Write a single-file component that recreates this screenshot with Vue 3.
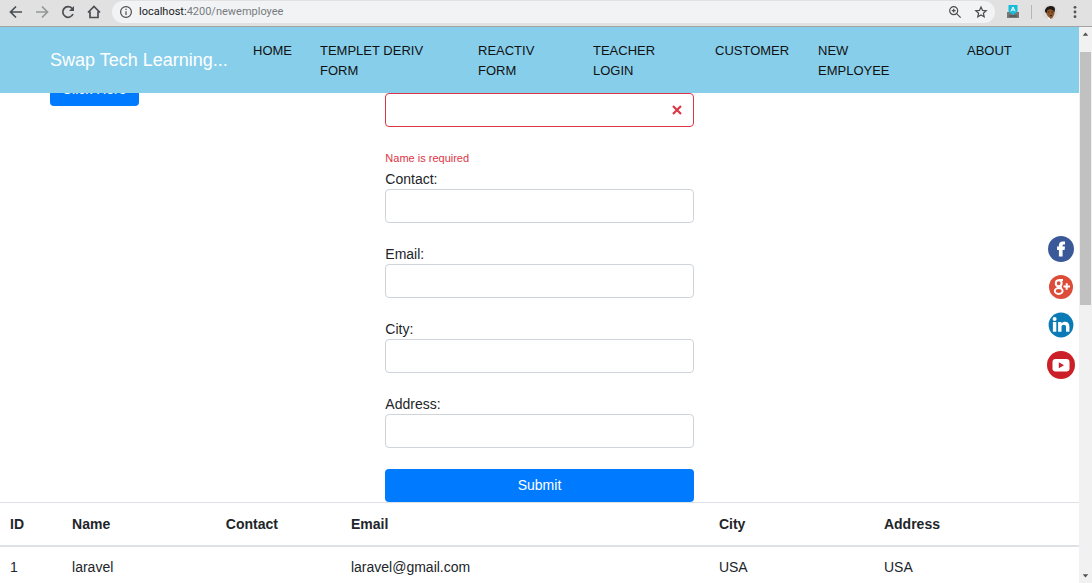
<script setup>
import { ref } from 'vue'

const links = ['HOME', 'TEMPLET DERIV FORM', 'REACTIV FORM', 'TEACHER LOGIN', 'CUSTOMER', 'NEW EMPLOYEE', 'ABOUT']
const fields = [
  { key: 'contact', label: 'Contact:' },
  { key: 'email', label: 'Email:' },
  { key: 'city', label: 'City:' },
  { key: 'address', label: 'Address:' },
]
const form = ref({ name: '', contact: '', email: '', city: '', address: '' })
const employees = [
  { id: 1, name: 'laravel', contact: '', email: 'laravel@gmail.com', city: 'USA', address: 'USA' },
]
</script>

<template>
  <div class="window">
    <div class="toolbar">
      <button class="tool" aria-label="Back">
        <svg viewBox="0 0 16 16" class="line"><path d="M14 8H3M8 2.5L2.5 8L8 13.5" /></svg>
      </button>
      <button class="tool faded" aria-label="Forward">
        <svg viewBox="0 0 16 16" class="line"><path d="M2 8H13M8 2.5L13.5 8L8 13.5" /></svg>
      </button>
      <button class="tool" aria-label="Reload">
        <svg viewBox="0 0 16 16" class="line"><path d="M13 10A5.3 5.3 0 1 1 12 4.4" /><path d="M14 2V7H9Z" class="solid" /></svg>
      </button>
      <button class="tool" aria-label="Home">
        <svg viewBox="0 0 16 16" class="line"><path d="M2 8.5L8 2.5L14 8.5M4 7.5V13.5H12V7.5" /></svg>
      </button>
      <div class="omnibox">
        <svg viewBox="0 0 16 16" class="line thin info"><circle cx="8" cy="8" r="5.4" /><path d="M8 7.3V11M8 4.8V6" /></svg>
        <button class="url"><span class="host">localhost:</span>4200/newemployee</button>
        <button class="tool" aria-label="Zoom">
          <svg viewBox="0 0 16 16" class="line thin"><circle cx="6.7" cy="6.7" r="4" /><path d="M9.8 9.8L13.7 13.7M4.8 6.7H8.6M6.7 4.8V8.6" /></svg>
        </button>
        <button class="tool" aria-label="Bookmark">
          <svg viewBox="0 0 16 16" class="line thin"><path d="M8 3L9.5 6.4L13.2 6.8L10.4 9.2L11.2 12.8L8 10.9L4.8 12.8L5.6 9.2L2.8 6.8L6.5 6.4Z" /></svg>
        </button>
      </div>
      <button class="tool ext" aria-label="Extension">
        <svg viewBox="0 0 16 16"><path d="M2 8H14V14H2Z" fill="#777" /><path d="M4 12H12" stroke="#444" /><path d="M3.5 1H12.5V7.5L8 11L3.5 7.5Z" fill="#18bcdb" /><path d="M6 7.3L8 3L10 7.3M6.8 6H9.2" fill="none" stroke="#fff" /></svg>
      </button>
      <span class="divider"></span>
      <button class="tool avatar" aria-label="Profile">
        <svg viewBox="0 0 16 16"><circle cx="8" cy="8" r="7.5" fill="#dadada" /><path d="M4 5Q8 2 12.5 5V9Q11.5 14 8.5 15Q5 12 4 9Z" fill="#8b552b" /><path d="M3 8C2 1 13 0 13 5L12.5 8Q10 4 5.5 6L4.5 9Z" fill="#211913" /><path d="M6 8H7M9.5 8H11M8 11.5H10" stroke="#3d2415" /><path d="M6 13L8.5 14.5L7 16Z" fill="#fff" /></svg>
      </button>
      <button class="tool menu" aria-label="Menu">
        <svg viewBox="0 0 16 16" fill="#505357"><circle cx="8" cy="3.3" r="1.4" /><circle cx="8" cy="8" r="1.4" /><circle cx="8" cy="12.7" r="1.4" /></svg>
      </button>
    </div>

    <div class="viewport">
      <div class="page">
        <header class="navbar">
          <a href="#" class="brand">Swap Tech Learning...</a>
          <nav>
            <ul class="links">
              <li v-for="l in links" :key="l"><a href="#">{{ l }}</a></li>
            </ul>
          </nav>
        </header>

        <main class="scroller">
          <div class="row">
            <div class="col"><button class="btn">Click Here</button></div>
            <form class="col form" @submit.prevent>
              <div class="invalid">
                <input id="name" v-model="form.name" type="text" aria-label="Name" aria-describedby="name-error" aria-invalid="true">
                <svg viewBox="0 0 10 10" class="cross"><path d="M1 1L9 9M9 1L1 9" /></svg>
              </div>
              <p id="name-error" class="error">Name is required</p>
              <template v-for="f in fields" :key="f.key">
                <label :for="f.key">{{ f.label }}</label>
                <input :id="f.key" v-model="form[f.key]" type="text">
              </template>
              <button class="btn wide" type="submit">Submit</button>
            </form>
          </div>

          <table>
            <colgroup>
              <col class="c-id"><col class="c-name"><col class="c-contact"><col class="c-email"><col class="c-city"><col>
            </colgroup>
            <thead>
              <tr><th>ID</th><th>Name</th><th>Contact</th><th>Email</th><th>City</th><th>Address</th></tr>
            </thead>
            <tbody>
              <tr v-for="e in employees" :key="e.id">
                <td>{{ e.id }}</td><td>{{ e.name }}</td><td>{{ e.contact }}</td><td>{{ e.email }}</td><td>{{ e.city }}</td><td>{{ e.address }}</td>
              </tr>
            </tbody>
          </table>
        </main>

        <aside class="social">
          <a href="#" aria-label="Facebook">
            <svg width="26" height="26" viewBox="0 0 26 26"><circle cx="13" cy="13" r="13" fill="#3b5998" /><path d="M10.9 20.5V13.9H9V10.6H10.9V9.2C10.9 6.8 12.3 5.4 14.7 5.4H17V8.6H15.8C14.9 8.6 14.6 9 14.6 9.7V10.6H17L16.6 13.9H14.6V20.5Z" fill="#fff" /></svg>
          </a>
          <a href="#" aria-label="Google Plus">
            <svg width="24" height="24" viewBox="0 0 24 24"><circle cx="12" cy="12" r="12" fill="#dd4b39" /><g fill="none" stroke="#fff"><ellipse cx="9.7" cy="8.2" rx="2.9" ry="3" stroke-width="2" /><ellipse cx="9.7" cy="16" rx="3.9" ry="2.9" stroke-width="2" /><path d="M9.7 5H14M11.4 11L12.4 13.5" stroke-width="1.8" /><path d="M14.5 11.5H21M17.7 8.3V14.7" stroke-width="2" /></g></svg>
          </a>
          <a href="#" aria-label="LinkedIn">
            <svg width="26" height="26" viewBox="0 0 26 26"><circle cx="13" cy="13" r="12.4" fill="#0b7bb8" /><g fill="#fff"><circle cx="6.6" cy="7" r="2" /><path d="M4.9 10.1H8.3V19.7H4.9ZM10.1 10.1H13.4V11.4C15.4 8.9 21.4 9 21.4 14.2V19.7H18V14.8C18 12 13.5 12 13.5 14.8V19.7H10.1Z" /></g></svg>
          </a>
          <a href="#" aria-label="YouTube">
            <svg width="28" height="28" viewBox="0 0 28 28"><circle cx="14" cy="14" r="14" fill="#cb2027" /><rect x="5.5" y="8" width="17" height="12.5" rx="3" fill="#fff" /><path d="M11.8 11.2L17 14.2L11.8 17.2Z" fill="#cb2027" /></svg>
          </a>
        </aside>
      </div>

      <div class="scrollbar">
        <svg viewBox="0 0 14 14" class="arrow"><path d="M4 9L7 5.5L10 9Z" /></svg>
        <div class="track"><div class="thumb"></div></div>
        <svg viewBox="0 0 14 14" class="arrow"><path d="M4 5L7 8.5L10 5Z" /></svg>
      </div>
    </div>
  </div>
</template>

<style>
body {
  overflow: hidden;
}
</style>

<style scoped>
* {
  box-sizing: border-box;
}
.window {
  display: flex;
  flex-direction: column;
  height: 100vh;
  background: #fff;
  color: #212529;
  font: 14px/21px "Liberation Sans", Arial, sans-serif;
}
button {
  padding: 0;
  border: 0;
  background: none;
  font: inherit;
  color: inherit;
}
a {
  color: inherit;
  text-decoration: none;
}
svg {
  display: block;
}

.toolbar {
  display: flex;
  align-items: center;
  flex: none;
  height: 27px;
  padding: 0 9px 3px 8px;
  gap: 10px;
  background: #e1e1e1;
  border-bottom: 1px solid #a3a3a3;
}
.tool {
  flex: none;
  width: 16px;
  height: 16px;
}
.line {
  fill: none;
  stroke: #4a4d51;
  stroke-width: 1.7;
}
.line .solid {
  fill: #4a4d51;
  stroke: none;
}
.thin {
  stroke-width: 1.2;
}
.faded {
  opacity: 0.5;
}
.omnibox {
  display: flex;
  align-items: center;
  flex: 1;
  height: 22px;
  padding: 0 6px;
  gap: 10px;
  border-radius: 11px;
  background: #f1f3f4;
}
.info {
  flex: none;
  width: 16px;
}
.url {
  flex: 1;
  margin-left: -5px;
  text-align: left;
  font: 11px/16px Roboto, sans-serif;
  color: #777b80;
}
.host {
  color: #202124;
}
.divider {
  width: 1px;
  height: 14px;
  background: #b5b5b5;
}
.avatar {
  margin-right: -1px;
}

.viewport {
  display: flex;
  flex: 1;
  min-height: 0;
}
.page {
  position: relative;
  display: flex;
  flex-direction: column;
  flex: 1;
  min-width: 0;
}
.navbar {
  display: flex;
  flex: none;
  height: 66px;
  padding: 0 52px 0 50px;
  background: #87ceeb;
}
.brand {
  flex: none;
  width: 203px;
  font-size: 18px;
  line-height: 66px;
  color: #fff;
}
nav {
  flex: 1;
}
.links {
  display: grid;
  grid-template-columns: 67fr 158fr 115fr 122fr 103fr 149fr 60fr;
  margin: 0;
  padding: 14px 0 0;
  list-style: none;
  font-size: 13px;
  line-height: 20px;
  color: #111;
}
.links li {
  padding-right: 28px;
}
.links li:nth-child(6) {
  padding-right: 56px;
}
.links li:last-child {
  padding-right: 0;
}

.scroller {
  flex: 1;
  min-height: 0;
  overflow: hidden;
}
.row {
  display: grid;
  grid-template-columns: repeat(3, 1fr);
  margin-top: -20px;
  padding: 0 37px 0 36px;
}
.col {
  padding: 0 14px;
}
.form {
  padding: 20px 13px 0 14px;
}
.btn {
  height: 33px;
  padding: 0 12px;
  border-radius: 4px;
  background: #007bff;
  color: #fff;
}
.wide {
  display: block;
  width: 100%;
}
label {
  display: block;
  height: 20px;
}
input {
  display: block;
  width: 100%;
  height: 34px;
  margin-bottom: 21px;
  padding: 0 10px;
  border: 1px solid #ced4da;
  border-radius: 4px;
  background: #fff;
  font: inherit;
  color: #495057;
}
.invalid {
  position: relative;
}
.invalid input {
  border-color: #dc3545;
}
.cross {
  position: absolute;
  top: 12px;
  right: 12px;
  width: 10px;
  fill: none;
  stroke: #dc3545;
  stroke-width: 2.2;
}
.error {
  margin: 0;
  font-size: 11px;
  line-height: 21px;
  color: #dc3545;
}

table {
  width: 100%;
  table-layout: fixed;
  border-spacing: 0;
  text-align: left;
}
th {
  padding: 11px 10px 10px;
  border-top: 1px solid #dee2e6;
  border-bottom: 2px solid #dee2e6;
}
td {
  padding: 10px;
}
.c-id {
  width: 5.75%;
}
.c-name {
  width: 14.25%;
}
.c-contact {
  width: 11.6%;
}
.c-email {
  width: 34.1%;
}
.c-city {
  width: 15.3%;
}

.social {
  position: absolute;
  top: 209px;
  right: 4px;
  display: flex;
  flex-direction: column;
  align-items: center;
  gap: 13px;
}

.scrollbar {
  display: flex;
  flex-direction: column;
  flex: none;
  width: 13px;
  background: #f1f1f1;
}
.arrow {
  flex: none;
  width: 13px;
  height: 14px;
  fill: #505050;
}
.track {
  flex: 1;
  padding: 11px 1px 0;
}
.thumb {
  height: 49%;
  background: #c1c1c1;
}
</style>
